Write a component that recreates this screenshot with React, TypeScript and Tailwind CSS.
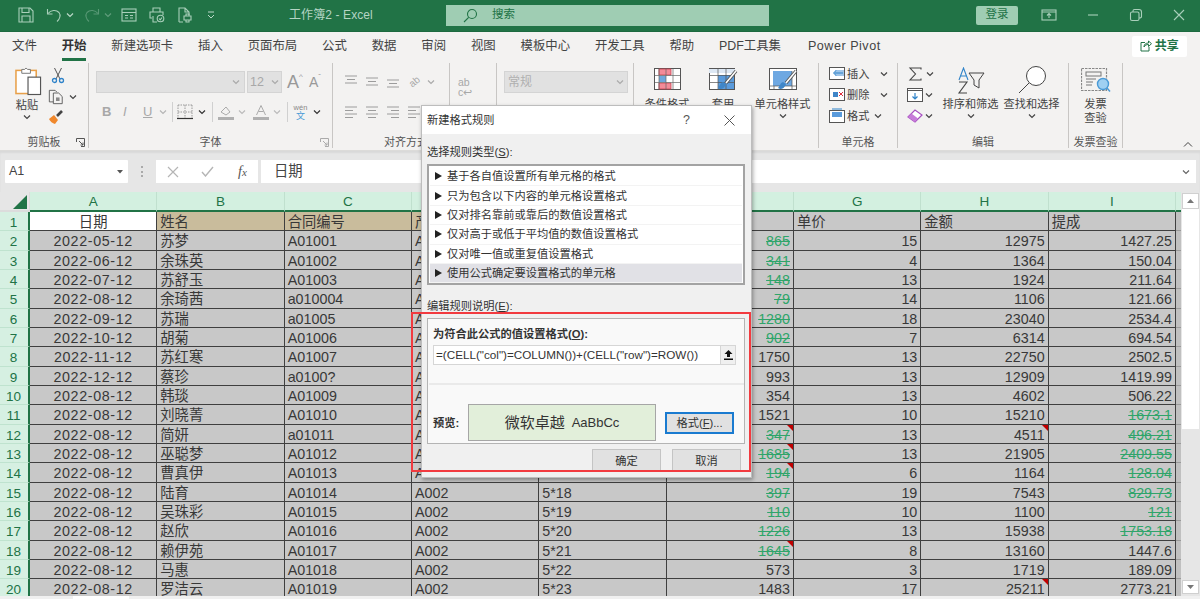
import React from "react";

const names = ["苏梦","余珠英","苏舒玉","余琦茜","苏瑞","胡菊","苏红寒","蔡珍","韩琰","刘晓菁","简妍","巫聪梦","曹真伊","陆育","吴珠彩","赵欣","赖伊苑","马惠","罗洁云"];
const dates = ["2022-05-12","2022-06-12","2022-07-12","2022-08-12","2022-09-12","2022-10-12","2022-11-12","2022-12-12","2022-08-12","2022-08-12","2022-08-12","2022-08-12","2022-08-12","2022-08-12","2022-08-12","2022-08-12","2022-08-12","2022-08-12","2022-08-12"];
const codes = ["A01001","A01002","A01003","a010004","a01005","A01006","A01007","a0100?","A01009","A01010","a01011","A01012","A01013","A01014","A01015","A01016","A01017","A01018","A01019"];
const qty = [865,341,148,79,1280,902,1750,993,354,1521,347,1685,194,397,110,1226,1645,573,1483];
const price = [15,4,13,14,18,7,13,13,13,10,13,13,6,19,10,13,8,3,17];
const amount = [12975,1364,1924,1106,23040,6314,22750,12909,4602,15210,4511,21905,1164,7543,1100,15938,13160,1719,25211];
const bonus = ["1427.25","150.04","211.64","121.66","2534.4","694.54","2502.5","1419.99","506.22","1673.1","496.21","2409.55","128.04","829.73","121","1753.18","1447.6","189.09","2773.21"];
const qtyStrike = [2,3,4,5,6,7,12,13,14,15,16,17,18];
const bonusStrike = [11,12,13,14,15,16,17];
const fCorner = [12,13,14,18];
const hCorner = [12,20];
const letters = ["A","B","C","D","E","F","G","H","I"];
const rules = ["基于各自值设置所有单元格的格式","只为包含以下内容的单元格设置格式","仅对排名靠前或靠后的数值设置格式","仅对高于或低于平均值的数值设置格式","仅对唯一值或重复值设置格式","使用公式确定要设置格式的单元格"];
const tabs = ["文件","开始","新建选项卡","插入","页面布局","公式","数据","审阅","视图","模板中心","开发工具","帮助","PDF工具集"];

function Chev({ c = "#444", s = 8 }: { c?: string; s?: number }) {
  return (
    <svg width={s} height={s} viewBox="0 0 8 8" fill="none" stroke={c} strokeWidth="1.2" className="shrink-0">
      <path d="M1 2.5 4 5.5 7 2.5" />
    </svg>
  );
}

function Launcher({ c = "#555" }: { c?: string }) {
  return (
    <svg width="9" height="9" viewBox="0 0 9 9" fill="none" stroke={c} strokeWidth="1">
      <path d="M.5 4V.5H8.5V8.5H5M3 3l4 4M7 4.5V7H4.5" />
    </svg>
  );
}

function TitleIcon({ children, w = 16 }: { children: React.ReactNode; w?: number }) {
  return (
    <svg width={w} height="16" viewBox={`0 0 ${w} 16`} fill="none" stroke="#a9cfba" strokeWidth="1.1" className="shrink-0">
      {children}
    </svg>
  );
}

function AlignIcon({ mode = "left", c = "#9c9c9c" }: { mode?: string; c?: string }) {
  const a = mode === "top" ? ["M1 2H13","M3 5.5H11","M1 9H13"] : mode === "mid" ? ["M1 4H13","M3 7.5H11","M1 11H13"] : mode === "bot" ? ["M1 6H13","M3 9.5H11","M1 13H13"] : mode === "center" ? ["M1 2H13","M3 5.5H11","M1 9H13","M3 12.5H11"] : mode === "right" ? ["M1 2H13","M5 5.5H13","M1 9H13","M5 12.5H13"] : ["M1 2H13","M1 5.5H9","M1 9H13","M1 12.5H9"];
  return (
    <svg width="14" height="15" viewBox="0 0 14 15" fill="none" stroke={c} strokeWidth="1" className="shrink-0">
      {a.map((d) => <path key={d} d={d} />)}
    </svg>
  );
}

function Brush() {
  return (
    <g>
      <path d="M30 3 20 15" stroke="#555" strokeWidth="3.4" fill="none" />
      <path d="M30 3 20 15" stroke="#fff" strokeWidth="1.6" fill="none" />
      <path d="M14 21c3 0 5-2 6-5l-3-2c-3 1-3 4-5 6z" fill="#3f86c8" />
    </g>
  );
}

function TitleBar() {
  return (
    <div className="flex h-[32px] items-center border-b border-[#1d6a40] bg-[#217346] pb-[1px]">
      <div className="ml-[18px]"><TitleIcon><path d="M1 1H12L15 4V15H1Z" /><path d="M4 1V5.5H11V1M4 15V9H12V15" /></TitleIcon></div>
      <div className="ml-[12px]"><TitleIcon><path d="M1.5 2V7H6.5" /><path d="M2 6.5C5 3 10 2.5 13 5.5 15 8 14 12 11 14.5" /></TitleIcon></div>
      <div className="ml-[4px]"><Chev c="#bcd9c9" /></div>
      <div className="ml-[10px] opacity-40"><TitleIcon><path d="M14.5 2V7H9.5" /><path d="M14 6.5C11 3 6 2.5 3 5.5 1 8 2 12 5 14.5" /></TitleIcon></div>
      <div className="ml-[4px] opacity-40"><Chev c="#bcd9c9" /></div>
      <div className="ml-[9px]"><TitleIcon><rect x="1" y="2" width="14" height="12" /><path d="M1 5.5H15M4 8.5H7M9 8.5H12M4 11H7M9 11H12" /></TitleIcon></div>
      <div className="ml-[12px]"><TitleIcon><path d="M4 5V1H11V5M3 11H1V5H14V8M4 9V15H8" /><circle cx="11.5" cy="11.5" r="3.3" /><path d="M10 11.5 11.2 12.8 13 10.5" /></TitleIcon></div>
      <div className="ml-[12px]"><TitleIcon><path d="M2 15V1H8L12 5V8M8 1V5H12M2 15H6" /><path d="M7 9H14V13H7ZM9 9V7H12V9M9 13V15H12V13" /></TitleIcon></div>
      <div className="ml-[13px]"><svg width="10" height="10" viewBox="0 0 10 10" fill="none" stroke="#bcd9c9"><path d="M2 2H8M2 5 5 8 8 5" /></svg></div>
      <div className="ml-[73px] w-[90px] text-[12px] tracking-[0.1px] text-[#b5d5c4]">工作簿2 - Excel</div>
      <div className="ml-[67px] flex h-[21px] w-[323px] items-center bg-[#9fcdb3] pl-[17px] text-[#217346]">
        <svg width="15" height="15" viewBox="0 0 15 15" fill="none" stroke="#217346" strokeWidth="1.1"><circle cx="9" cy="6" r="4.5" /><path d="M5.7 9.3 1 14" /></svg>
        <span className="ml-[14px] text-[11.5px]">搜索</span>
      </div>
      <div className="ml-[207px] flex h-[19px] w-[42px] items-center justify-center rounded-[2px] bg-[#9fcdb3] text-[11.5px] text-[#217346]">登录</div>
      <div className="ml-[23px]"><TitleIcon><rect x="1" y="3" width="14" height="10" /><path d="M1 5H15M8 11V7M6 8.5 8 6.5 10 8.5" /></TitleIcon></div>
      <div className="ml-[28px]"><TitleIcon><path d="M3 8H13" /></TitleIcon></div>
      <div className="ml-[27px]"><TitleIcon><rect x="2.5" y="5" width="8.5" height="8.5" rx="1.5" /><path d="M5 5V4Q5 2.500 6.500 2.500H11Q13.500 2.500 13.500 5V9.500Q13.500 11 11 11" /></TitleIcon></div>
      <div className="ml-[27px]"><TitleIcon><path d="M3 3 13 13M13 3 3 13" /></TitleIcon></div>
    </div>
  );
}

function TabBar() {
  return (
    <div className="flex h-[28px] items-center bg-[#f3f2f1] pl-[12px] text-[12.4px] text-[#444]">
      <div className="flex gap-[24.85px]">
        {tabs.map((t) => (
          <div key={t} className={t === "开始" ? "relative font-bold text-[#333]" : ""}>
            {t}
            {t === "开始" && <div className="absolute -bottom-[6px] left-0 right-0 h-[3px] bg-[#217346]" />}
          </div>
        ))}
      </div>
      <div className="ml-[27px] text-[12.6px] tracking-[0.5px]">Power Pivot</div>
      <div className="ml-[251px] flex h-[21px] w-[55px] items-center justify-center gap-[3px] rounded-[2px] bg-white text-[12px] font-bold text-[#217346]">
        <svg width="12" height="12" viewBox="0 0 12 12" fill="none" stroke="#217346"><path d="M5 2.500H1V11H9V7" /><path d="M4 7C4 4 6 3 8.500 3V1L11.500 3.700 8.500 6.500V4.500C6.500 4.500 5 5 4 7Z" /></svg>
        共享
      </div>
    </div>
  );
}

function Group({ w, label, launcher, labelColor = "#555", labelPad, children }: { w: number; label: string; launcher?: string; labelColor?: string; labelPad?: string; children: React.ReactNode }) {
  return (
    <div style={{ width: w }} className="mt-[3px] h-[85px] shrink-0 border-r border-[#c8c6c4]">
      <div className="h-[73px]">{children}</div>
      <div className="relative h-[12px] text-center text-[11px] leading-[13px]" style={{ color: labelColor, paddingLeft: labelPad }}>
        {label}
        {launcher && <div className="absolute right-[3px] top-[2px]"><Launcher c={launcher} /></div>}
      </div>
    </div>
  );
}

function Ribbon() {
  return (
    <div className="flex h-[90px] items-start bg-[#f3f2f1] text-[11.2px] leading-[14px] text-[#555]">
      <Group w={89} label="剪贴板" launcher="#555" labelPad="0px">
        <div className="flex pl-[16px] pt-[3px]">
          <div className="flex w-[22px] flex-col items-center">
            <svg width="27" height="30" viewBox="0 0 28 30" fill="none" className="-ml-[1px] shrink-0 self-start">
              <rect x="1" y="4" width="21" height="24" fill="#fff" stroke="#e8a04a" strokeWidth="1.6" />
              <path d="M7 7V3H10Q11.500 0 13 3H16V7Z" fill="#fff" stroke="#777" />
              <rect x="13.500" y="11" width="13" height="18" fill="#fff" stroke="#555" strokeWidth="1.2" />
            </svg>
            <div className="mt-[2px] whitespace-nowrap text-[#444]">粘贴</div>
            <div className="mt-[1px]"><Chev /></div>
          </div>
          <div className="ml-[10px] flex flex-col">
            <svg width="14" height="17" viewBox="0 0 14 17" fill="none" className="ml-[3px] mt-[1px]">
              <path d="M3.500 1 9 12M10.500 1 5 12" stroke="#555" />
              <circle cx="3.500" cy="13.500" r="2" stroke="#2f83c9" strokeWidth="1.3" />
              <circle cx="10.500" cy="13.500" r="2" stroke="#2f83c9" strokeWidth="1.3" />
            </svg>
            <div className="mt-[5px] flex items-center">
              <svg width="16" height="16" viewBox="0 0 18 17" fill="none" stroke="#555">
                <path d="M9 14H1.500V1H8L10 3" />
                <path d="M6 4H12L16 8V16H6Z" fill="#f3f2f1" />
                <rect x="9" y="9" width="4" height="4" fill="#888" stroke="none" />
              </svg>
              <div className="ml-[5px]"><Chev /></div>
            </div>
            <svg width="16" height="16" viewBox="0 0 16 16" fill="none" className="mt-[4px]">
              <path d="M1 10 6 6 10 11 7 15Q3 14 1 10Z" fill="#f0882c" />
              <path d="M9 7 14 2" stroke="#444" strokeWidth="2.6" />
            </svg>
          </div>
        </div>
      </Group>

      <Group w={244} label="字体" launcher="#aaa" labelPad="0px">
        <div className="pl-[7px] pt-[8px]">
          <div className="flex h-[22px] items-center">
            <div className="flex h-[22px] w-[149px] items-center justify-end border border-[#d4d4d4] bg-[#e1e1e1] pr-[4px]"><Chev c="#aaa" /></div>
            <div className="ml-[2px] flex h-[22px] w-[35px] items-center justify-between border border-[#d4d4d4] bg-[#e1e1e1] px-[2px] text-[12.5px] text-[#a8a8a8]">12<Chev c="#aaa" /></div>
            <div className="ml-[5px] flex w-[17px] text-[18px] leading-[20px] text-[#999]">A<span className="text-[8px] leading-[10px]">^</span></div>
            <div className="ml-[5px] flex w-[16px] text-[14px] leading-[20px] text-[#999]">A<span className="text-[8px] leading-[10px]">ˇ</span></div>
          </div>
          <div className="mt-[7px] flex h-[24px] items-center text-[13px] text-[#a8a8a8]">
            <span className="ml-[6px] w-[20px] font-bold">B</span>
            <span className="w-[21px] pl-[1px] italic">I</span>
            <span className="w-[16px] underline">U</span>
            <Chev c="#b5b5b5" />
            <div className="ml-[5px] h-[20px] w-px bg-[#d0d0d0]" />
            <svg width="16" height="16" viewBox="0 0 16 16" fill="none" className="ml-[4px]"><path d="M1 1H15M1 1V15M15 1V15M1 8H15" stroke="#999" strokeDasharray="1.500 1" /><path d="M8 1V15" stroke="#999" strokeDasharray="1.500 1" /><path d="M0 14.500H16" stroke="#333" strokeWidth="1.2" /></svg>
            <div className="ml-[5px]"><Chev c="#333" /></div>
            <div className="ml-[6px] h-[20px] w-px bg-[#d0d0d0]" />
            <svg width="16" height="17" viewBox="0 0 16 17" fill="none" className="ml-[5px]"><path d="M3 8 8 3 12 8 8 11Z" stroke="#aaa" /><rect x="0" y="13" width="16" height="3" fill="#b0b0b0" /></svg>
            <div className="ml-[4px]"><Chev c="#bbb" /></div>
            <div className="ml-[7px] w-[16px] text-center">
              <svg width="16" height="17" viewBox="0 0 16 17" fill="none"><path d="M3.500 11 8 1.500 12.500 11M5.500 7.500H10.500" stroke="#aaa" /><rect x="0" y="13" width="16" height="3" fill="#b0b0b0" /></svg>
            </div>
            <div className="ml-[4px]"><Chev c="#bbb" /></div>
            <div className="ml-[6px] h-[20px] w-px bg-[#d0d0d0]" />
            <div className="ml-[5px] flex w-[15px] flex-col items-center text-[7.5px] leading-[8px] text-[#888]"><span>wén</span><span className="text-[9px] leading-[9px] text-[#4a9ad6]">文</span></div>
            <div className="ml-[5px]"><Chev c="#333" /></div>
          </div>
        </div>
      </Group>

      <Group w={117} label="对齐方式" labelPad="30px">
        <div className="pl-[11px] pt-[11px]">
          <div className="flex items-center gap-[7px]">
            <AlignIcon mode="top" /><AlignIcon mode="mid" /><AlignIcon mode="bot" />
            <span className="ml-[2px] rotate-[-40deg] text-[10px] text-[#a8a8a8]">ab</span>
            <Chev c="#aaa" />
          </div>
          <div className="mt-[16px] flex items-center gap-[7px]">
            <AlignIcon mode="left" /><AlignIcon mode="center" /><AlignIcon mode="right" /><AlignIcon mode="left" />
          </div>
        </div>
      </Group>

      <Group w={47} label="">
        <div className="pl-[8px] pt-[14px] text-[10.5px] leading-[10px] text-[#a8a8a8]">ab<br />c↩</div>
        <div className="ml-[8px] mt-[11px] h-[2px] w-[14px] bg-[#999]" />
      </Group>

      <Group w={137} label="">
        <div className="pl-[7px] pt-[8px]">
          <div className="flex h-[22px] w-[124px] items-center justify-between border border-[#d4d4d4] bg-[#e1e1e1] px-[3px] text-[12px] text-[#b0b0b0]">常规<Chev c="#aaa" /></div>
        </div>
      </Group>

      <Group w={185} label="样式" labelPad="0px">
        <div className="flex pt-[5px] text-[#444]">
          <div className="ml-[19px] flex w-[28px] flex-col items-center">
            <svg width="27" height="22" viewBox="0 0 27 22" fill="none" className="shrink-0">
              <rect x="0.500" y="0.500" width="26" height="21" fill="#fff" stroke="#555" />
              <path d="M5 1H17V7H5ZM5 15H17V21H5Z" fill="#f38b98" stroke="#c8404f" strokeWidth="0.8" />
              <rect x="5" y="8" width="7" height="6" fill="#6ea8dc" />
              <path d="M5 1V21M12 1V21M19 1V21M1 7.500H26M1 14.500H26" stroke="#666" strokeWidth="0.7" />
            </svg>
            <div className="mt-[7px] whitespace-nowrap">条件格式</div>
          </div>
          <div className="ml-[25px] flex w-[34px] flex-col items-center">
            <svg width="34" height="24" viewBox="0 0 34 24" fill="none" className="shrink-0">
              <rect x="3.500" y="0.500" width="25" height="21" fill="#fff" stroke="#555" />
              <path d="M3 1H29V5H3Z" fill="#dde8f4" />
              <rect x="12" y="7" width="16" height="14" fill="#5a9bdc" />
              <path d="M12 1V21M20 1V21M4 7.500H28M4 14.500H28" stroke="#555" strokeWidth="0.7" />
              <Brush />
            </svg>
            <div className="mt-[5px] whitespace-nowrap">套用</div>
          </div>
          <div className="ml-[14px] flex w-[57px] flex-col items-center">
            <svg width="34" height="24" viewBox="0 0 34 24" fill="none" className="shrink-0">
              <rect x="3.500" y="0.500" width="27" height="21" fill="#fff" stroke="#555" />
              <rect x="7" y="3" width="19" height="15" fill="#6ea8e2" />
              <path d="M4 18H30M8 18V22M26 3V22" stroke="#555" strokeWidth="0.7" />
              <Brush />
            </svg>
            <div className="mt-[5px] whitespace-nowrap">单元格样式</div>
            <div className="mt-[1px]"><Chev /></div>
          </div>
        </div>
      </Group>

      <Group w={79} label="单元格" labelPad="0px">
        <div className="flex flex-col pl-[10px] text-[#444]">
          <div className="flex h-[21px] items-center">
            <svg width="16" height="14" viewBox="0 0 16 14" fill="none" stroke="#555"><rect x=".5" y=".5" width="15" height="12" fill="#fff" /><rect x="6" y="3" width="9" height="6" fill="#9fc5e8" stroke="none" /><path d="M5 6H14M7 3.500 4.500 6 7 8.500" stroke="#2f83c9" /></svg>
            <span className="ml-[2px] w-[33px]">插入</span><Chev />
          </div>
          <div className="flex h-[21px] items-center">
            <svg width="16" height="14" viewBox="0 0 16 14" fill="none" stroke="#555"><rect x=".5" y=".5" width="15" height="12" fill="#fff" /><rect x="4" y="4" width="5" height="5" fill="#3f86c8" stroke="none" /><path d="M10 4 14 8M14 4 10 8" stroke="#e0303f" /></svg>
            <span className="ml-[2px] w-[33px]">删除</span><Chev />
          </div>
          <div className="flex h-[21px] items-center">
            <svg width="16" height="15" viewBox="0 0 16 15" fill="none" stroke="#555"><rect x=".5" y="2.500" width="15" height="12" fill="#fff" /><rect x="3" y="4" width="10" height="5" fill="#5a9bdc" stroke="none" /><path d="M3 1H13" stroke="#2f83c9" /></svg>
            <span className="ml-[2px] w-[27px]">格式</span><Chev />
          </div>
        </div>
      </Group>

      <Group w={171} label="编辑" labelPad="0px">
        <div className="flex text-[#444]">
          <div className="flex w-[42px] flex-col pl-[9px]">
            <div className="flex h-[21px] items-center">
              <svg width="16" height="14" viewBox="0 0 16 14" fill="none" stroke="#444" strokeWidth="1.1" className="shrink-0"><path d="M14 2.500V1H3L8.500 7 3 13H14V11.500" /></svg>
              <span className="ml-[3px]"><Chev /></span>
            </div>
            <div className="flex h-[21px] items-center">
              <svg width="16" height="14" viewBox="0 0 16 14" fill="none"><rect x=".5" y=".5" width="15" height="13" fill="#fff" stroke="#555" /><path d="M1 2.500H15" stroke="#555" /><path d="M8 5V11M5.500 8.500 8 11 10.500 8.500" stroke="#2f83c9" strokeWidth="1.2" /></svg>
              <span className="ml-[2px]"><Chev /></span>
            </div>
            <div className="flex h-[21px] items-center">
              <svg width="16" height="14" viewBox="0 0 16 14" fill="none"><path d="M1 8 8 1 15 6 8 13Z" fill="#fff" stroke="#a64fc0" strokeWidth="1.2" /><path d="M1 8 4.500 4.500 11 9.500 8 13Z" fill="#c77bd9" /></svg>
              <span className="ml-[2px]"><Chev /></span>
            </div>
          </div>
          <div className="flex w-[61px] flex-col items-center pt-[4px]">
            <svg width="28" height="27" viewBox="0 0 28 27" fill="none" className="shrink-0">
              <path d="M2 13 6.500 1 11 13M3.500 9H9.500" stroke="#2f83c9" strokeWidth="1.1" />
              <path d="M2 15H10L2 26H10" stroke="#444" strokeWidth="1.1" />
              <path d="M12 6H27L22 13V21L17 18V13Z" stroke="#444" />
            </svg>
            <div className="mt-[3px] whitespace-nowrap">排序和筛选</div>
            <div className="mt-[1px]"><Chev /></div>
          </div>
          <div className="flex w-[61px] flex-col items-center pt-[3px]">
            <svg width="28" height="28" viewBox="0 0 28 28" fill="none" className="shrink-0">
              <circle cx="18" cy="10" r="9.500" fill="#fff" stroke="#444" />
              <path d="M11 17 1 27" stroke="#444" />
            </svg>
            <div className="mt-[3px] whitespace-nowrap">查找和选择</div>
            <div className="mt-[1px]"><Chev /></div>
          </div>
        </div>
      </Group>

      <Group w={54} label="发票查验" labelPad="0px">
        <div className="flex flex-col items-center pt-[5px] text-[#444]">
          <svg width="30" height="25" viewBox="0 0 30 25" fill="none" className="shrink-0">
            <rect x=".5" y=".5" width="25" height="22" fill="#f3f2f1" stroke="#888" strokeWidth="1.200" strokeDasharray="2.500 1" />
            <rect x="5" y="4" width="15" height="4" stroke="#777" />
            <path d="M5 11H15M5 14H12M5 17H11" stroke="#777" />
            <circle cx="22" cy="16" r="5.500" fill="#9fd0f2" stroke="#4a9ad6" strokeWidth="1.400" />
            <path d="M26 20 29 23.500" stroke="#4a9ad6" strokeWidth="1.500" />
          </svg>
          <div className="mt-[4px] text-center">发票<br />查验</div>
        </div>
      </Group>
      <div className="ml-[60px] mt-[81px]">
        <svg width="10" height="7" viewBox="0 0 10 7" fill="none" stroke="#444"><path d="M1 5.500 5 1.500 9 5.500" /></svg>
      </div>
    </div>
  );
}

function FormulaBar() {
  return (
    <div className="h-[42px] border-t border-[#dcdbd9] bg-[#e6e6e6] pl-[5px] pt-[9px] shadow-[inset_0_2px_2px_rgba(0,0,0,0.06)]">
      <div className="flex h-[23px] items-center">
        <div className="flex h-full w-[123px] items-center justify-between rounded-[1px] bg-white pl-[4px] pr-[5px] text-[12.5px] text-[#444]">
          A1
          <svg width="6" height="4" viewBox="0 0 6 4" fill="#555"><path d="M0 0H6L3 3.500Z" /></svg>
        </div>
        <div className="ml-[13px] flex h-[11px] flex-col justify-between">
          <div className="h-[2px] w-[2px] bg-[#aaa]" /><div className="h-[2px] w-[2px] bg-[#aaa]" /><div className="h-[2px] w-[2px] bg-[#aaa]" />
        </div>
        <div className="ml-[13px] flex h-full w-[102px] items-center bg-white">
          <svg width="12" height="12" viewBox="0 0 12 12" fill="none" stroke="#b5b5b5" strokeWidth="1.2" className="ml-[11px]"><path d="M1 1 11 11M11 1 1 11" /></svg>
          <svg width="13" height="11" viewBox="0 0 13 11" fill="none" stroke="#b5b5b5" strokeWidth="1.4" className="ml-[22px]"><path d="M1 6 4.500 10 12 1" /></svg>
          <span className="ml-[24px] font-['Liberation_Serif',serif] text-[14px] italic text-[#555]">f<span className="text-[11px]">x</span></span>
        </div>
        <div className="ml-[3px] flex h-full w-[935px] items-center justify-between bg-white pl-[13px] pr-[6px] text-[14.3px] text-[#444]">
          日期
          <Chev c="#666" />
        </div>
      </div>
    </div>
  );
}

function Corner() {
  return <div className="absolute right-0 top-0 h-0 w-0 border-l-[6px] border-t-[6px] border-l-transparent border-t-[#c00000]" />;
}

function Cell({ children, align = "l", className = "", strike, corner, date }: { children?: React.ReactNode; align?: "l" | "r" | "c"; className?: string; strike?: boolean; corner?: boolean; date?: boolean }) {
  const a = align === "l" ? "justify-start pl-[3px]" : align === "r" ? "justify-end pr-[3px]" : "justify-center";
  return (
    <div className={`relative flex items-center overflow-hidden whitespace-nowrap border-b border-r border-[#3f3f3f] bg-[#c8c8c8] pt-[3px] leading-[15px] ${a} ${className}`}>
      <span className={`${strike ? "text-[#2fa56a] line-through" : ""} ${date ? "tracking-[0.64px]" : ""}`}>{children}</span>
      {corner && <Corner />}
    </div>
  );
}

function Sheet() {
  return (
    <div className="flex h-[404px]">
      <div className="grid h-full w-[1181px] grid-cols-[30px_repeat(9,127.33px)_5px] grid-rows-[20px] auto-rows-[19.33px] content-start overflow-hidden bg-[#c8c8c8] text-[14.3px] text-[#383838]">
        <div className="flex items-end justify-end border-b-2 border-r border-b-[#dcdcdc] border-r-[#dcdcdc] bg-[#e6e6e6] pb-[1px] pr-[2px]">
          <div className="h-0 w-0 border-b-[14px] border-l-[14px] border-b-[#217346] border-l-transparent" />
        </div>
        {letters.map((l) => (
          <div key={l} className="flex items-center justify-center border-b-2 border-r border-b-[#217346] border-r-[#c0e0ce] bg-[#d3f0e0] pt-[2px] text-[13.5px] text-[#217346]">{l}</div>
        ))}
        <div className="border-b-2 border-b-[#217346] bg-[#d3f0e0]" />

        <RowHead n={1} />
        <Cell align="c" className="!bg-white">日期</Cell>
        <Cell className="!bg-[#c9bc9c]">姓名</Cell>
        <Cell className="!bg-[#c9bc9c]">合同编号</Cell>
        <Cell className="!bg-[#c9bc9c]">产品编号</Cell>
        <Cell className="!bg-[#c9bc9c]" />
        <Cell />
        <Cell>单价</Cell>
        <Cell>金额</Cell>
        <Cell>提成</Cell>
        <div className="border-b border-[#9a9a9a] bg-[#c0c0c0]" />

        {names.map((name, i) => {
          const r = i + 2;
          return (
            <React.Fragment key={r}>
              <RowHead n={r} />
              <Cell align="c" date>{dates[i]}</Cell>
              <Cell>{name}</Cell>
              <Cell>{codes[i]}</Cell>
              <Cell>A002</Cell>
              <Cell>{r >= 14 ? `5*${r + 3}` : ""}</Cell>
              <Cell align="r" strike={qtyStrike.includes(r)} corner={fCorner.includes(r)}>{qty[i]}</Cell>
              <Cell align="r">{price[i]}</Cell>
              <Cell align="r" corner={hCorner.includes(r)}>{amount[i]}</Cell>
              <Cell align="r" strike={bonusStrike.includes(r)}>{bonus[i]}</Cell>
              <div className="border-b border-[#9a9a9a] bg-[#c0c0c0]" />
            </React.Fragment>
          );
        })}
      </div>
      <div className="flex w-[19px] flex-col bg-[#e6e6e6] pb-[2px] pl-[1px] pr-[1px] pt-[1px]">
        <div className="flex h-[16px] items-center justify-center border border-[#d0d0d0] bg-white">
          <svg width="7" height="4" viewBox="0 0 7 4" fill="#777"><path d="M0 4 3.500 0 7 4Z" /></svg>
        </div>
        <div className="h-[220px] bg-white" />
        <div className="flex-1" />
        <div className="flex h-[14px] items-center justify-center border border-[#d0d0d0] bg-white">
          <svg width="7" height="4" viewBox="0 0 7 4" fill="#777"><path d="M0 0 3.500 4 7 0Z" /></svg>
        </div>
      </div>
    </div>
  );
}

function RowHead({ n }: { n: number }) {
  return (
    <div className="flex items-center justify-center border-b border-r-2 border-b-[#bfe3cf] border-r-[#217346] bg-[#d6f0e2] pr-[1px] pt-[3px] text-[13.5px] leading-[15px] text-[#217346]">{n}</div>
  );
}

function Dialog() {
  return (
    <div className="absolute left-[421px] top-[105px] h-[373px] w-[331px] border border-[#bdbdbd] bg-[#f0f0f0] text-[11.25px] leading-[14px] text-[#333] shadow-[1px_2px_4px_rgba(0,0,0,0.35)]">
      <div className="flex h-[28px] items-center bg-white pl-[5px]">
        <span className="w-[256px]">新建格式规则</span>
        <span className="text-[12.5px] text-[#555]">?</span>
        <svg width="11" height="11" viewBox="0 0 11 11" fill="none" stroke="#555" className="ml-[34px]"><path d="M.5.5 10.500 10.500M10.500.5.5 10.500" /></svg>
      </div>
      <div className="px-[5px] pt-[11px]">
        <div className="h-[14px]">选择规则类型(<u>S</u>):</div>
        <div className="mt-[5px] flex h-[121px] w-[318px] flex-col border-2 border-[#a3a3a3] bg-white p-[1px]">
          {rules.map((r, i) => (
            <div key={r} className={`flex h-[19.4px] shrink-0 items-center border-b border-[#f3f3f3] pl-[5px] ${i === 5 ? "bg-[#e1e1e6]" : ""}`}>
              <svg width="7" height="8" viewBox="0 0 7 8" fill="#222" className="shrink-0"><path d="M0 0 7 4 0 8Z" /></svg>
              <span className="ml-[5px]">{r}</span>
            </div>
          ))}
        </div>
        <div className="mt-[14px] h-[14px]">编辑规则说明(<u>E</u>):</div>
        <div className="mt-[5px] h-[126px] w-[318px] border border-[#b4b4b4] bg-[#f9f9f9] pl-[5px]">
          <div className="pt-[8px] font-bold">为符合此公式的值设置格式(<u>O</u>):</div>
          <div className="mt-[4px] flex h-[20px] w-[303px] items-center border border-[#d6d6d6] bg-white pl-[2px]">
            <span className="w-[284px] whitespace-nowrap text-[11.7px]">=(CELL("col")=COLUMN())+(CELL("row")=ROW())</span>
            <div className="flex h-full flex-1 items-center justify-center border-l border-[#d6d6d6] bg-[#f0f0f0]">
              <svg width="9" height="10" viewBox="0 0 9 10" fill="#111"><path d="M4.500 0 8.500 4H6V7H3V4H.5ZM0 8.500H9V10H0Z" /></svg>
            </div>
          </div>
          <div className="-ml-[4px] mt-[18px] h-[2px] w-[315px] bg-[#eaeaea]" />
          <div className="mt-[19px] flex h-[37px] items-center">
            <span className="w-[35px] font-bold">预览:</span>
            <div className="flex h-[37px] w-[188px] items-center justify-center gap-[7px] border border-[#a6a6a6] bg-[#e2efda]">
              <span className="text-[15px]">微软卓越</span>
              <span className="text-[13px]">AaBbCc</span>
            </div>
            <div className="ml-[9px] flex h-[22px] w-[69px] items-center justify-center border-2 border-[#1a7bd0] bg-[#e1e1e1]">格式(<u>F</u>)...</div>
          </div>
        </div>
        <div className="mt-[5px] flex h-[23px] justify-end gap-[11px] pr-[5px]">
          <div className="flex w-[69px] items-center justify-center border border-[#c4c4c4] bg-[#e1e1e1]">确定</div>
          <div className="flex w-[69px] items-center justify-center border border-[#c4c4c4] bg-[#e1e1e1]">取消</div>
        </div>
      </div>
    </div>
  );
}

export default function App() {
  return (
    <div className="relative h-[599px] w-[1200px] overflow-hidden bg-[#e6e6e6] [font-family:'Liberation_Sans','Noto_Sans_CJK_SC',sans-serif]">
      <TitleBar />
      <TabBar />
      <Ribbon />
      <FormulaBar />
      <Sheet />
      <div className="flex h-[3px] bg-[#f0f0f0] pl-[73px]"><div className="h-full w-[56px] bg-white" /></div>
      <Dialog />
      <div className="absolute left-[411px] top-[312px] h-[160px] w-[340px] border-2 border-[#f23a3f]" />
    </div>
  );
}
